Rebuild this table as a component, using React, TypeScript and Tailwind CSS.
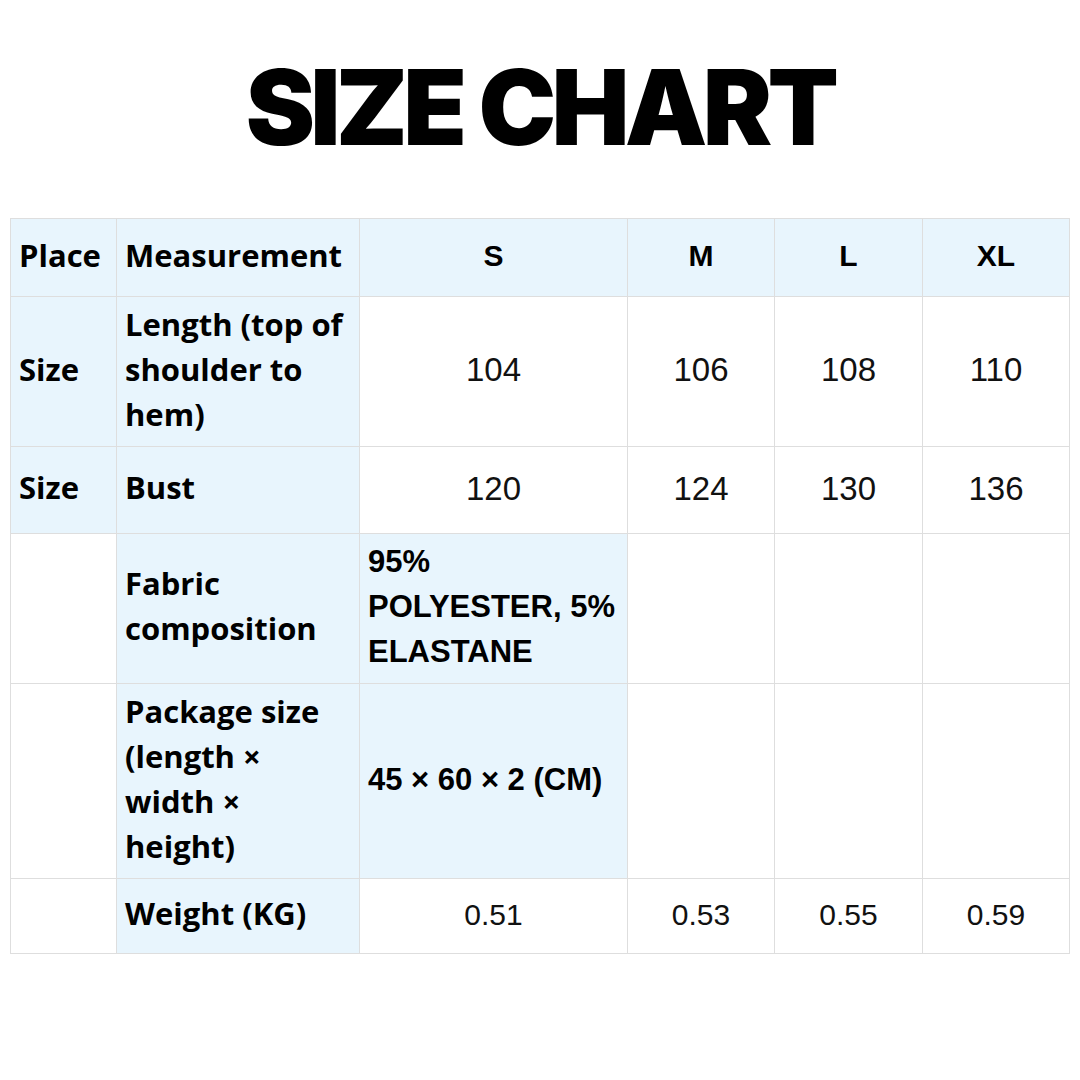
const label = "font-['Open_Sans',sans-serif] font-bold text-[31px] leading-[45px] text-black";
const head = "font-['Liberation_Sans',Arial,sans-serif] font-bold text-[30px] text-black";

const blue = "bg-[#e8f5fd]";

type Row = {
  h: string;
  place: string;
  placeBlue: boolean;
  measure: string[];
  values: string[] | null;
  valueSize?: string;
  span?: string[];
};

const rows: Row[] = [
  { h: "h-[150px]", place: "Size", placeBlue: true, measure: ["Length (top of", "shoulder to", "hem)"], values: ["104", "106", "108", "110"], valueSize: "text-[33px]" },
  { h: "h-[87px]", place: "Size", placeBlue: true, measure: ["Bust"], values: ["120", "124", "130", "136"], valueSize: "text-[33px]" },
  { h: "h-[150px]", place: "", placeBlue: false, measure: ["Fabric", "composition"], values: null, span: ["95%", "POLYESTER, 5%", "ELASTANE"] },
  { h: "h-[195px]", place: "", placeBlue: false, measure: ["Package size", "(length ×", "width ×", "height)"], values: null, span: ["45 × 60 × 2 (CM)"] },
  { h: "h-[75px]", place: "", placeBlue: false, measure: ["Weight (KG)"], values: ["0.51", "0.53", "0.55", "0.59"], valueSize: "text-[30px]" },
];

const cols = "grid grid-cols-[106px_243px_268px_147px_148px_147px]";
const cell = "border-r border-b border-[#dedede] flex items-center";

export default function App() {
  return (
    <div className="w-[1080px] h-[1080px] bg-white flex flex-col items-center">
      <h1 className="mt-[52px] font-['Inter',sans-serif] font-black text-[104px] leading-[110px] tracking-[-0.045em] text-black">
        SIZE CHART
      </h1>

      <div className="mt-[56px] self-start ml-[10px] border-t border-l border-[#dedede]">
        <div className={`${cols} h-[78px]`}>
          <div className={`${cell} ${blue} pl-[8px] pb-[5px] ${label}`}>Place</div>
          <div className={`${cell} ${blue} pl-[8px] pb-[5px] ${label}`}>Measurement</div>
          {["S", "M", "L", "XL"].map((s) => (
            <div key={s} className={`${cell} ${blue} justify-center pb-[4px] ${head}`}>
              {s}
            </div>
          ))}
        </div>

        {rows.map((r, i) => (
          <div key={i} className={`${cols} ${r.h}`}>
            <div className={`${cell} ${r.placeBlue ? blue : "bg-white"} pl-[8px] pb-[5px] ${label}`}>{r.place}</div>
            <div className={`${cell} ${blue} pl-[8px] pb-[5px]`}>
              <div className={label}>
                {r.measure.map((m) => (
                  <div key={m}>{m}</div>
                ))}
              </div>
            </div>
            {r.values ? (
              r.values.map((v) => (
                <div
                  key={v}
                  className={`${cell} justify-center pb-[3px] font-['Liberation_Sans',Arial,sans-serif] ${r.valueSize} text-[#111]`}
                >
                  {v}
                </div>
              ))
            ) : (
              <>
                <div className={`${cell} ${blue} pl-[8px] pb-[4px]`}>
                  <div className={`${head} text-[31px] leading-[45px]`}>
                    {r.span!.map((s) => (
                      <div key={s}>{s}</div>
                    ))}
                  </div>
                </div>
                <div className={cell} />
                <div className={cell} />
                <div className={cell} />
              </>
            )}
          </div>
        ))}
      </div>
    </div>
  );
}
